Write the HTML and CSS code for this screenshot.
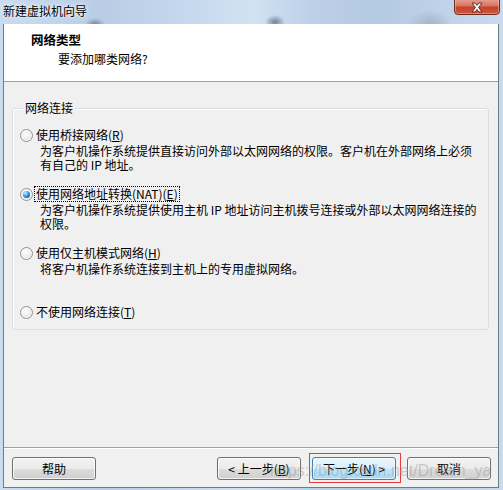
FILE: index.html
```html
<!DOCTYPE html>
<html lang="zh-CN">
<head>
<meta charset="utf-8">
<title>新建虚拟机向导</title>
<link rel="stylesheet" href="styles.css">
</head>
<body>
<div class="window">
  <div class="titlebar">
    <span class="title">新建虚拟机向导</span>
    <div class="close">
      <svg width="16" height="11" viewBox="0 0 16 11">
        <path d="M3 1 L6 1 L8 3.5 L10 1 L13 1 L9.6 5.5 L13 10 L10 10 L8 7.5 L6 10 L3 10 L6.4 5.5 Z" fill="#fff" stroke="#4a2218" stroke-width="0.9" stroke-linejoin="round"/>
      </svg>
    </div>
  </div>
  <div class="client">
    <div class="header">
      <div class="h-title">网络类型</div>
      <div class="h-sub">要添加哪类网络?</div>
    </div>
    <div class="body">
      <fieldset class="group">
        <legend>网络连接</legend>
        <div class="option">
          <div class="opt-row"><span class="radio"></span><span class="label">使用桥接网络(<u>R</u>)</span></div>
          <div class="desc">为客户机操作系统提供直接访问外部以太网网络的权限。客户机在外部网络上必须<br>有自己的 IP 地址。</div>
        </div>
        <div class="option">
          <div class="opt-row"><span class="radio checked"></span><span class="label focus">使用网络地址转换(NAT)(<u>E</u>)</span></div>
          <div class="desc">为客户机操作系统提供使用主机 IP 地址访问主机拨号连接或外部以太网网络连接的<br>权限。</div>
        </div>
        <div class="option">
          <div class="opt-row"><span class="radio"></span><span class="label">使用仅主机模式网络(<u>H</u>)</span></div>
          <div class="desc">将客户机操作系统连接到主机上的专用虚拟网络。</div>
        </div>
        <div class="option last">
          <div class="opt-row"><span class="radio"></span><span class="label">不使用网络连接(<u>T</u>)</span></div>
        </div>
      </fieldset>
    </div>
    <div class="footer">
      <button class="btn">帮助</button>
      <div class="spacer"></div>
      <button class="btn">&lt; 上一步(<u>B</u>)</button>
      <button class="btn default">下一步(<u>N</u>) &gt;</button>
      <button class="btn">取消</button>
    </div>
  </div>
  <div class="watermark">https://blog.csdn.net/Dream_ya</div>
</div>
</body>
</html>
```

FILE: styles.css
```css
* { box-sizing: border-box; }
html, body { margin: 0; padding: 0; }
body {
  width: 503px;
  height: 490px;
  overflow: hidden;
  font-family: "Noto Sans CJK SC", "Noto Sans", sans-serif;
  font-size: 12px;
  color: #000;
}
.window {
  position: relative;
  width: 503px;
  height: 490px;
  display: flex;
  flex-direction: column;
  background:
    radial-gradient(ellipse 10px 6px at 95px 24px, rgba(70,80,95,0.55), rgba(70,80,95,0) 100%),
    radial-gradient(ellipse 10px 7px at 275px 22px, rgba(60,70,85,0.6), rgba(60,70,85,0) 100%),
    radial-gradient(ellipse 22px 14px at 430px 24px, rgba(120,130,145,0.35), rgba(120,130,145,0) 100%),
    linear-gradient(to right, #c9dcf0 0%, #b8cde5 20%, #c3d6ec 35%, #d2e2f3 50%, #bcd0e8 62%, #b4c9e2 75%, #c8daee 100%);
}
.titlebar {
  height: 24px;
  flex: none;
  position: relative;
  display: flex;
  align-items: center;
  padding-left: 3px;
  padding-bottom: 2px;
}
.title {
  font-size: 12px;
  line-height: 16px;
  color: #000;
  text-shadow: 0 0 6px rgba(255,255,255,0.95), 0 0 3px rgba(255,255,255,0.9);
}
.close {
  position: absolute;
  left: 454px;
  top: -2px;
  width: 46px;
  height: 17px;
  border: 1px solid #6e2a20;
  border-radius: 0 0 4px 4px;
  background: linear-gradient(to bottom, #e6a293 0%, #d97460 45%, #c4432b 55%, #d1553c 100%);
  box-shadow: inset 0 0 0 1px rgba(255,200,190,0.45);
  display: flex;
  align-items: center;
  justify-content: center;
  padding-top: 2px;
}
.client {
  flex: 1;
  margin: 0 4px 2px 3px;
  border: 1px solid #6c7b8c;
  border-top: none;
  background: #f0f0f0;
  display: flex;
  flex-direction: column;
}
.header {
  height: 58px;
  flex: none;
  background: #fff;
  border-bottom: 1px solid #a0a0a0;
  padding: 8px 0 0 27px;
}
.h-title {
  font-weight: bold;
  font-size: 12.5px;
  line-height: 16px;
}
.h-sub {
  margin-top: 3px;
  padding-left: 27px;
  line-height: 16px;
}
.body {
  flex: 1;
  padding: 19px 9px 0 8px;
}
.group {
  margin: 0;
  height: 229px;
  border: 1px solid #d5dfe5;
  border-radius: 3px;
  padding: 13px 0 0 7px;
  box-shadow: inset 1px 1px 0 #fff;
}
.group legend {
  margin-left: 3px;
  padding: 0 2px;
  line-height: 14px;
}
.option {
  height: 59px;
}
.option.last { height: 14px; }
.opt-row {
  display: flex;
  align-items: center;
  height: 14px;
}
.radio {
  width: 13px;
  height: 13px;
  flex: none;
  border-radius: 50%;
  border: 1px solid #8f9396;
  background: radial-gradient(circle at 45% 40%, #ffffff 0%, #f1f1f1 40%, #d3d5d7 100%);
  box-shadow: inset 0 0 0 1px rgba(255,255,255,0.7);
  margin-right: 2px;
  position: relative;
}
.radio.checked::after {
  content: "";
  position: absolute;
  left: 2px;
  top: 2px;
  width: 7px;
  height: 7px;
  border-radius: 50%;
  background: radial-gradient(circle at 35% 30%, #d4efff 0%, #4fb0ee 35%, #1a6cb5 70%, #0c3f78 100%);
}
.label {
  line-height: 14px;
  white-space: nowrap;
  padding: 0 1px;
}
.label.focus {
  outline: 1px dotted #000;
  outline-offset: 0;
}
.desc {
  margin-top: 2px;
  padding-left: 20px;
  line-height: 14px;
  white-space: nowrap;
}
.footer {
  height: 40px;
  flex: none;
  border-top: 1px solid #a0a0a0;
  box-shadow: inset 0 1px 0 #fff;
  display: flex;
  align-items: flex-start;
  gap: 11px;
  padding: 9px 7px 0 8px;
}
.spacer { flex: 1; }
.btn {
  width: 84px;
  height: 23px;
  flex: none;
  font-family: "Noto Sans CJK SC", "Noto Sans", sans-serif;
  font-size: 12px;
  color: #000;
  border: 1px solid #707070;
  border-radius: 3px;
  padding: 0;
  background: linear-gradient(to bottom, #f2f2f2 0%, #ebebeb 50%, #dddddd 50%, #cfcfcf 100%);
  box-shadow: inset 0 0 0 1px rgba(255,255,255,0.75);
  position: relative;
}
.btn.default {
  border-color: #3c7fb1;
  background: linear-gradient(to bottom, #eaf6fd 0%, #d9f0fc 50%, #bee6fd 50%, #a7d9f5 100%);
  box-shadow: inset 0 0 0 1px rgba(255,255,255,0.6);
}
.btn.default::after {
  content: "";
  position: absolute;
  left: -4px;
  top: -5px;
  right: -6px;
  bottom: -4px;
  border: 1px solid #e53b3b;
}
.watermark {
  position: absolute;
  left: 270px;
  top: 462px;
  font-family: "Liberation Sans", Arial, sans-serif;
  font-size: 16px;
  line-height: 18px;
  color: rgba(150,150,150,0.45);
  pointer-events: none;
  white-space: nowrap;
}
```
